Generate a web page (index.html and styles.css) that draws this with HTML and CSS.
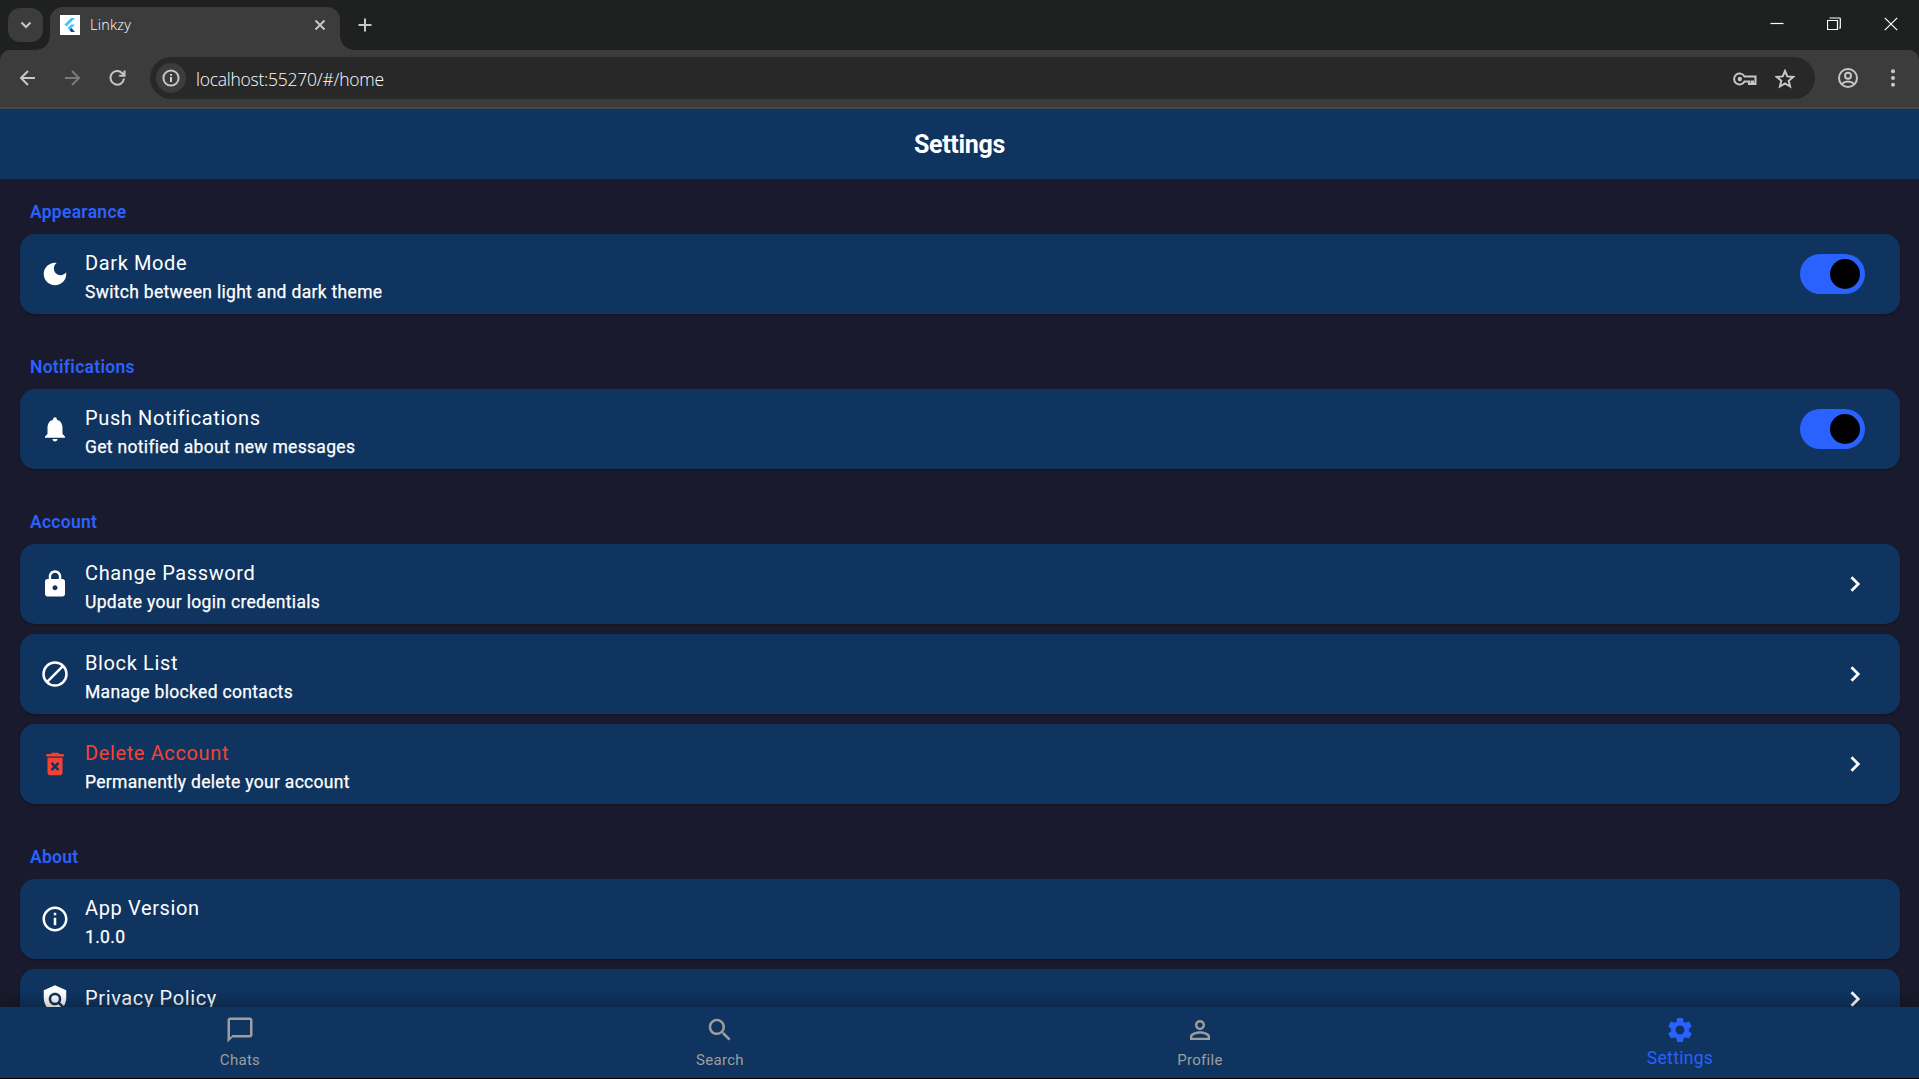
FILE: index.html
```html
<!DOCTYPE html>
<html lang="en">
<head>
<meta charset="utf-8">
<title>Linkzy</title>
<link rel="stylesheet" href="styles.css">
</head>
<body>
<div class="browser">
  <div class="tabstrip">
    <div class="tab-search"><svg width="12" height="8" viewBox="0 0 12 8"><path d="M1.5 1.5 6 6l4.500-4.500" class="line thick"/></svg></div>
    <div class="tab">
      <svg class="favicon" width="20" height="20" viewBox="0 0 20 20"><path fill="#fff" d="M0 0h20v20H0z"/><path fill="#42c1f7" d="M11 3h4L6.500 11.500 4.500 9.500zM11 9.500h4L11.500 13l-2-2z"/><path fill="#42c1f7" d="m7.500 13 2-2 2 2-2 2z"/><path fill="#0b4a9c" d="m9.500 15 2-2 3.500 4h-4z"/></svg>
      <span class="tab-title">Linkzy</span>
      <svg class="tab-close" width="12" height="12" viewBox="0 0 12 12"><path class="line thick" d="m1.500 1.500 9 9m0-9-9 9"/></svg>
    </div>
    <svg class="new-tab" width="14" height="14" viewBox="0 0 14 14"><path class="line thick" d="M7 .5v13M.5 7h13"/></svg>
    <div class="window-buttons">
      <svg width="14" height="14" viewBox="0 0 14 14"><path class="line white" d="M.5 6.500h13"/></svg>
      <svg width="14" height="14" viewBox="0 0 14 14"><path class="line white" d="M1.500 3.500h9v9h-10v-9zM3 1.500V1h9.500q.8 0 .8.800V11H12"/></svg>
      <svg width="14" height="14" viewBox="0 0 14 14"><path class="line white" d="m.8.8 12.400 12.400m0-12.400L.8 13.200"/></svg>
    </div>
  </div>
  <div class="toolbar">
    <svg width="20" height="20" viewBox="0 0 20 20"><path class="line thick" d="M17 10H3m7-7-7 7 7 7"/></svg>
    <svg class="dim" width="20" height="20" viewBox="0 0 20 20"><path class="line thick" d="M2 10h14m-7-7 7 7-7 7"/></svg>
    <svg width="20" height="20" viewBox="0 0 20 20"><path class="line thick" d="M16 10.500a6.800 6.800 0 1 1-2-5.500l2.300 2.300M16.500 2.500v5.300h-5.300"/></svg>
    <div class="omnibox">
      <div class="site-info"><svg width="18" height="18" viewBox="0 0 18 18"><circle cx="9" cy="9" r="7.600" class="line thick"/><path fill="#e3e3e3" d="M8.100 8h1.800v5H8.100zM8.100 5h1.800v1.800H8.100z"/></svg></div>
      <span class="url">localhost:55270/#/home</span>
      <svg class="key" width="24" height="16" viewBox="0 0 24 16"><path class="line thick" d="M11.500 5.500a5.500 5.500 0 1 0 0 5H16V13h2.500v-2.500H20V13h2.500V5.500z"/><circle cx="6.800" cy="8" r="2.200" fill="#c7c7c7"/></svg>
      <svg class="star" width="20" height="20" viewBox="0 0 20 20"><path class="line thick" d="m10 2 2.300 5.400 5.900.5-4.500 3.900 1.400 5.700-5.100-3-5.100 3 1.400-5.700-4.500-3.900 5.900-.5z"/></svg>
    </div>
    <svg class="account" width="22" height="22" viewBox="0 0 22 22"><circle cx="11" cy="11" r="9" class="line thick"/><circle cx="11" cy="8.800" r="3" class="line thick"/><path class="line thick" d="M4.500 17q6.500-5 13 0"/></svg>
    <svg class="menu" width="6" height="20" viewBox="0 0 6 20"><g fill="#c7c7c7"><circle cx="3" cy="3.200" r="2"/><circle cx="3" cy="10" r="2"/><circle cx="3" cy="16.800" r="2"/></g></svg>
  </div>
</div>

<header class="appbar">Settings</header>

<main class="content">
  <h2>Appearance</h2>
  <div class="card">
    <svg class="icon" viewBox="0 0 24 24"><path d="M12 3c-4.970 0-9 4.030-9 9s4.030 9 9 9 9-4.030 9-9c0-.46-.04-.92-.1-1.360-.98 1.370-2.580 2.260-4.400 2.260-2.980 0-5.400-2.420-5.400-5.400 0-1.810.89-3.420 2.260-4.400-.44-.06-.9-.1-1.360-.1z"/></svg>
    <div class="text"><p class="title">Dark Mode</p><p class="sub">Switch between light and dark theme</p></div>
    <div class="switch"><i></i></div>
  </div>

  <h2>Notifications</h2>
  <div class="card">
    <svg class="icon" viewBox="0 0 24 24"><path d="M12 22c1.100 0 2-.9 2-2h-4c0 1.100.89 2 2 2zm6-6v-5c0-3.070-1.640-5.640-4.500-6.320V4c0-.83-.67-1.500-1.500-1.500s-1.500.67-1.500 1.500v.68C7.630 5.360 6 7.920 6 11v5l-2 2v1h16v-1l-2-2z"/></svg>
    <div class="text"><p class="title">Push Notifications</p><p class="sub">Get notified about new messages</p></div>
    <div class="switch"><i></i></div>
  </div>

  <h2>Account</h2>
  <div class="card">
    <svg class="icon" viewBox="0 0 24 24"><path d="M18 8h-1V6c0-2.760-2.240-5-5-5S7 3.240 7 6v2H6c-1.100 0-2 .9-2 2v10c0 1.100.9 2 2 2h12c1.100 0 2-.9 2-2V10c0-1.100-.9-2-2-2zm-6 9c-1.100 0-2-.9-2-2s.9-2 2-2 2 .9 2 2-.9 2-2 2zm3.100-9H8.900V6c0-1.710 1.390-3.100 3.100-3.100 1.710 0 3.100 1.390 3.100 3.100v2z"/></svg>
    <div class="text"><p class="title">Change Password</p><p class="sub">Update your login credentials</p></div>
    <svg class="chevron" viewBox="0 0 24 24"><path d="M10 6 8.590 7.410 13.170 12l-4.580 4.590L10 18l6-6z"/></svg>
  </div>
  <div class="card">
    <svg class="icon" viewBox="0 0 24 24"><g fill="none" stroke="#fff" stroke-width="2"><circle cx="12" cy="12" r="9.200"/><path d="M18.300 5.700 5.700 18.300"/></g></svg>
    <div class="text"><p class="title">Block List</p><p class="sub">Manage blocked contacts</p></div>
    <svg class="chevron" viewBox="0 0 24 24"><path d="M10 6 8.590 7.410 13.170 12l-4.580 4.590L10 18l6-6z"/></svg>
  </div>
  <div class="card danger">
    <svg class="icon" viewBox="0 0 24 24"><path d="M6 19c0 1.100.9 2 2 2h8c1.100 0 2-.9 2-2V7H6v12zm2.460-7.120 1.410-1.410L12 12.590l2.120-2.120 1.410 1.410L13.410 14l2.120 2.120-1.410 1.410L12 15.410l-2.120 2.120-1.410-1.410L10.590 14l-2.130-2.120zM15.500 4l-1-1h-5l-1 1H5v2h14V4z"/></svg>
    <div class="text"><p class="title">Delete Account</p><p class="sub">Permanently delete your account</p></div>
    <svg class="chevron" viewBox="0 0 24 24"><path d="M10 6 8.590 7.410 13.170 12l-4.580 4.590L10 18l6-6z"/></svg>
  </div>

  <h2>About</h2>
  <div class="card">
    <svg class="icon" viewBox="0 0 24 24"><path d="M11 7h2v2h-2zm0 4h2v6h-2zm1-9C6.480 2 2 6.480 2 12s4.480 10 10 10 10-4.480 10-10S17.520 2 12 2zm0 18c-4.410 0-8-3.590-8-8s3.590-8 8-8 8 3.590 8 8-3.590 8-8 8z"/></svg>
    <div class="text"><p class="title">App Version</p><p class="sub">1.0.0</p></div>
  </div>
  <div class="card single">
    <svg class="icon" viewBox="0 0 24 24"><path d="M21 5l-9-4-9 4v6c0 5.550 3.840 10.740 9 12 2.300-.56 4.330-1.900 5.880-3.710l-3.120-3.120c-1.940 1.290-4.580 1.070-6.290-.64-1.950-1.950-1.950-5.120 0-7.070 1.950-1.950 5.120-1.950 7.070 0 1.710 1.710 1.920 4.350.64 6.290l2.900 2.900C20.290 15.690 21 13.380 21 11V5z"/><circle cx="12" cy="12" r="3"/></svg>
    <div class="text"><p class="title">Privacy Policy</p></div>
    <svg class="chevron" viewBox="0 0 24 24"><path d="M10 6 8.590 7.410 13.170 12l-4.580 4.590L10 18l6-6z"/></svg>
  </div>
</main>

<nav class="bottom-nav">
  <div class="nav-item"><svg class="nav-icon" viewBox="0 0 24 24"><path d="M20 2H4c-1.100 0-2 .9-2 2v18l4-4h14c1.100 0 2-.9 2-2V4c0-1.100-.9-2-2-2zm0 14H6l-2 2V4h16v12z"/></svg><span>Chats</span></div>
  <div class="nav-item"><svg class="nav-icon" viewBox="0 0 24 24"><path d="M15.500 14h-.79l-.28-.27C15.410 12.590 16 11.110 16 9.500 16 5.910 13.090 3 9.500 3S3 5.910 3 9.500 5.910 16 9.500 16c1.610 0 3.090-.59 4.230-1.570l.27.28v.79l5 4.990L20.490 19l-4.990-5zm-6 0C7.010 14 5 11.990 5 9.500S7.010 5 9.500 5 14 7.010 14 9.500 11.990 14 9.500 14z"/></svg><span>Search</span></div>
  <div class="nav-item"><svg class="nav-icon" viewBox="0 0 24 24"><path d="M12 5.900c1.160 0 2.100.94 2.100 2.100s-.94 2.100-2.100 2.100S9.900 9.160 9.900 8s.94-2.100 2.100-2.100m0 9c2.970 0 6.100 1.460 6.100 2.100v1.100H5.900V17c0-.64 3.130-2.100 6.100-2.100M12 4C9.790 4 8 5.790 8 8s1.790 4 4 4 4-1.790 4-4-1.790-4-4-4zm0 9c-2.670 0-8 1.340-8 4v3h16v-3c0-2.660-5.330-4-8-4z"/></svg><span>Profile</span></div>
  <div class="nav-item active"><svg class="nav-icon" viewBox="0 0 24 24"><path d="M19.140 12.940c.04-.3.06-.61.06-.94 0-.32-.02-.64-.07-.94l2.030-1.580c.18-.14.23-.41.12-.61l-1.920-3.320c-.12-.22-.37-.29-.59-.22l-2.390.96c-.5-.38-1.030-.7-1.620-.94l-.36-2.540c-.04-.24-.24-.41-.48-.41h-3.840c-.24 0-.43.17-.47.41l-.36 2.540c-.59.24-1.130.57-1.620.94l-2.390-.96c-.22-.08-.47 0-.59.22L2.740 8.870c-.12.21-.08.47.12.61l2.030 1.580c-.05.3-.09.63-.09.94s.02.64.07.94l-2.030 1.580c-.18.14-.23.41-.12.61l1.920 3.320c.12.22.37.29.59.22l2.390-.96c.5.38 1.030.7 1.620.94l.36 2.540c.05.24.24.41.48.41h3.840c.24 0 .44-.17.47-.41l.36-2.540c.59-.24 1.130-.56 1.620-.94l2.390.96c.22.08.47 0 .59-.22l1.920-3.320c.12-.22.07-.47-.12-.61l-2.010-1.580zM12 15.600c-1.980 0-3.600-1.620-3.600-3.600s1.620-3.600 3.600-3.600 3.600 1.620 3.600 3.600-1.620 3.600-3.600 3.600z"/></svg><span>Settings</span></div>
</nav>
</body>
</html>
```

FILE: styles.css
```css
* { box-sizing: border-box; margin: 0; padding: 0; }
body {
  width: 1919px;
  height: 1079px;
  display: flex;
  flex-direction: column;
  overflow: hidden;
  background: #1a1a2e;
  color: #fff;
  font-family: Roboto, sans-serif;
}
svg { display: block; flex: none; }

/* Browser chrome */
.browser { flex: none; height: 109px; background: #1f2120; font-family: "Open Sans", sans-serif; }
.line { fill: none; stroke: #c7c7c7; stroke-width: 1.200; }
.thick { stroke-width: 2; }
.white { stroke: #fff; }
.tabstrip { height: 50px; display: flex; align-items: flex-start; padding-left: 8px; }
.tab-search {
  width: 35px; height: 34px; margin-top: 8px; border-radius: 12px;
  background: #3c3c3c; display: flex; align-items: center; justify-content: center;
}
.tab {
  position: relative;
  width: 290px; height: 43px; margin: 7px 0 0 7px; padding: 0 14px 7px 10px;
  display: flex; align-items: center;
  background: #3c3c3c; border-radius: 13px 13px 0 0;
}
.tab::before, .tab::after {
  content: ""; position: absolute; bottom: 0; width: 14px; height: 14px;
}
.tab::before { left: -14px; background: radial-gradient(circle at 0 0, transparent 13.500px, #3c3c3c 14px); }
.tab::after { right: -14px; background: radial-gradient(circle at 100% 0, transparent 13.500px, #3c3c3c 14px); }
.tab-title { flex: 1; margin-left: 10px; padding-bottom: 1px; font-size: 14.500px; font-weight: 300; letter-spacing: .25px; color: #fff; }
.new-tab { margin: 18px 0 0 18px; }
.window-buttons { display: flex; gap: 43px; margin: 17px 21px 0 auto; }
.toolbar {
  height: 59px; padding: 0 23px 2px 18px; display: flex; align-items: center;
  background: #3c3c3c; border-bottom: 2px solid #474747; border-radius: 10px 10px 0 0;
}
.toolbar > svg { margin-right: 25px; }
.toolbar .dim { opacity: .45; }
.omnibox {
  width: 1665px; height: 42px; margin-left: -3px; padding: 0 20px 0 6px; border-radius: 21px;
  display: flex; align-items: center; background: #282828;
}
.site-info {
  width: 30px; height: 30px; border-radius: 50%; background: #3c3c3c;
  display: flex; align-items: center; justify-content: center;
}
.url { flex: 1; margin-left: 10px; padding-top: 2px; font-size: 17.500px; font-weight: 300; letter-spacing: -.25px; color: #fff; }
.key { margin: 2px 18px 0 0; }
.star { margin-top: 2px; }
.toolbar > .account { margin: 0 0 0 21.500px; }
.toolbar > .menu { margin: 0 0 0 auto; }

/* App */
.appbar {
  flex: none; height: 70px; line-height: 72px; text-align: center;
  background: #0f3460; font-size: 25px; font-weight: 700; letter-spacing: -.3px;
}
.content { flex: none; height: 828px; overflow: hidden; padding: 0 19px 0 20px; }
h2 {
  height: 75px; padding: 41px 10px 0; line-height: 25px;
  color: #2962ff; font-size: 17.500px; font-weight: 600; letter-spacing: .28px;
}
h2:first-child { height: 55px; padding-top: 21px; }
.card {
  height: 80px; padding: 0 35px 0 20px; border-radius: 15px;
  display: flex; align-items: center; background: #0f3460;
  box-shadow: 0 1px 2px rgba(0, 0, 0, .3);
}
.card + .card { margin-top: 10px; }
.single { height: 60px; }
.icon, .chevron { width: 30px; height: 30px; fill: #fff; }
.card .chevron { margin-right: -5px; }
.chevron path { stroke: #fff; stroke-width: .3; }
.text { flex: 1; margin-left: 15px; padding-top: 4px; }
.title { font-size: 20px; line-height: 30px; letter-spacing: .625px; }
.sub { font-size: 17.500px; line-height: 25px; letter-spacing: .3125px; padding-top: 2px; -webkit-text-stroke: .25px #fff; }
.single .text { padding: 0 0 2px; }
.danger .icon { fill: #f44336; }
.danger .title { color: #f44336; }
.switch { width: 65px; height: 40px; padding: 5px; border-radius: 20px; background: #2962ff; }
.switch i { display: block; width: 30px; height: 30px; margin-left: auto; border-radius: 50%; background: #000; }

.bottom-nav {
  flex: none; width: 1920px; height: 72px; display: flex; background: #0f3460; z-index: 1;
  border-bottom: 1px solid #000; box-shadow: 0 -4px 14px rgba(0, 0, 0, .3);
}
.nav-item {
  flex: 1; padding-top: 8px; display: flex; flex-direction: column; align-items: center;
  color: #9e9e9e; font-size: 15px; letter-spacing: .3px;
}
.nav-icon { width: 30px; height: 30px; fill: currentColor; }
.nav-item span { line-height: 20px; margin-top: 5px; }
.active { color: #2962ff; font-size: 17.500px; }
.active span { margin-top: 3px; }
```
